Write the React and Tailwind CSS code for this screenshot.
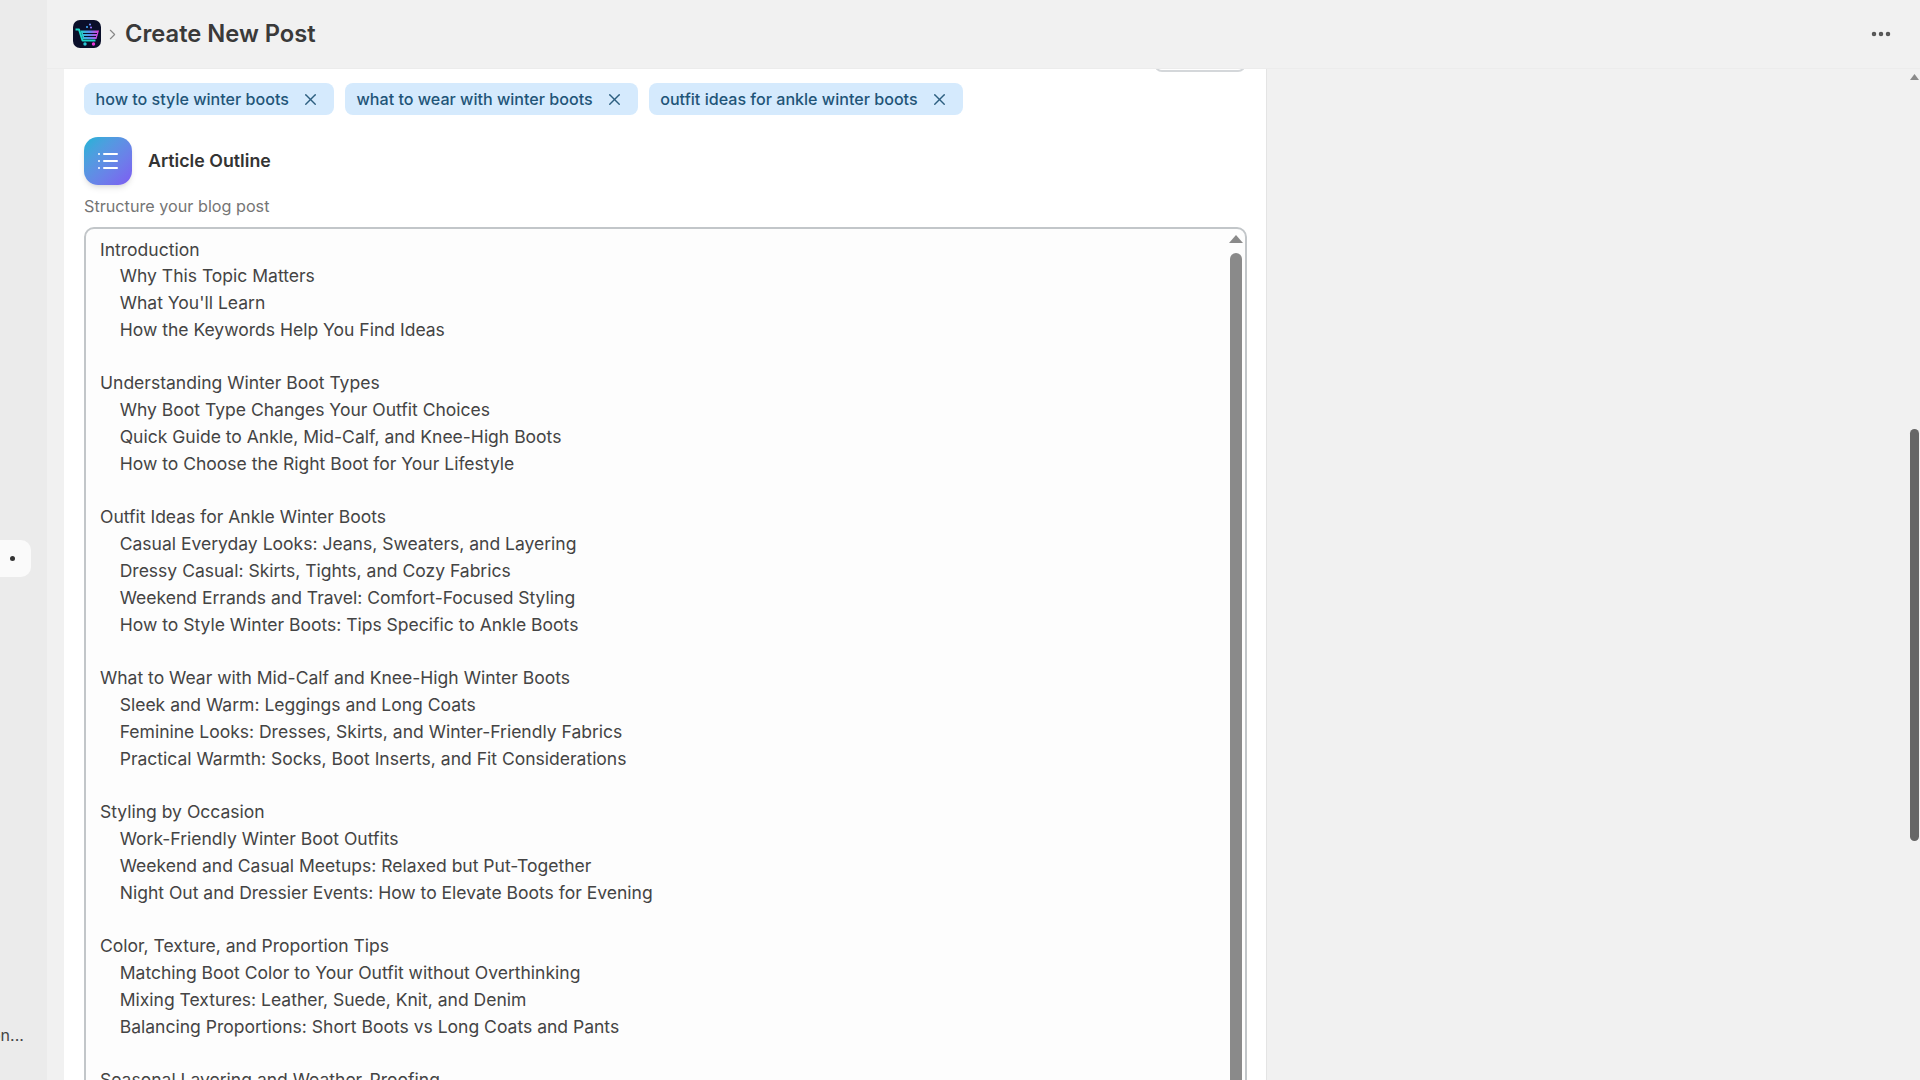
import React from "react";
import { X, List, ChevronRight, MoreHorizontal } from "lucide-react";

const keywords = ["how to style winter boots", "what to wear with winter boots", "outfit ideas for ankle winter boots"];

const outline = `Introduction
    Why This Topic Matters
    What You'll Learn
    How the Keywords Help You Find Ideas

Understanding Winter Boot Types
    Why Boot Type Changes Your Outfit Choices
    Quick Guide to Ankle, Mid-Calf, and Knee-High Boots
    How to Choose the Right Boot for Your Lifestyle

Outfit Ideas for Ankle Winter Boots
    Casual Everyday Looks: Jeans, Sweaters, and Layering
    Dressy Casual: Skirts, Tights, and Cozy Fabrics
    Weekend Errands and Travel: Comfort-Focused Styling
    How to Style Winter Boots: Tips Specific to Ankle Boots

What to Wear with Mid-Calf and Knee-High Winter Boots
    Sleek and Warm: Leggings and Long Coats
    Feminine Looks: Dresses, Skirts, and Winter-Friendly Fabrics
    Practical Warmth: Socks, Boot Inserts, and Fit Considerations

Styling by Occasion
    Work-Friendly Winter Boot Outfits
    Weekend and Casual Meetups: Relaxed but Put-Together
    Night Out and Dressier Events: How to Elevate Boots for Evening

Color, Texture, and Proportion Tips
    Matching Boot Color to Your Outfit without Overthinking
    Mixing Textures: Leather, Suede, Knit, and Denim
    Balancing Proportions: Short Boots vs Long Coats and Pants

Seasonal Layering and Weather-Proofing`;

function Logo() {
    return (
        <svg width="28" height="28" viewBox="0 0 28 28" className="rounded-[7px]">
            <defs>
                <linearGradient id="cart" x1="0" y1="0" x2="1" y2="0">
                    <stop offset="0" stopColor="#1fd6c8" />
                    <stop offset="0.5" stopColor="#5b8cf0" />
                    <stop offset="1" stopColor="#e838d8" />
                </linearGradient>
            </defs>
            <rect width="28" height="28" fill="#0a0f2a" />
            <path d="M2.500 9.500H6l3.500 11h13" fill="none" stroke="#1fd6c8" strokeWidth="2" strokeLinejoin="round" />
            <path d="M7.500 10.500H26L23.500 19H10z" fill="url(#cart)" />
            <path d="M10 13.500h14M11 16.500h12" stroke="#0a0f2a" strokeWidth="1" />
            <circle cx="12" cy="24" r="1.700" fill="#2bc8d8" />
            <circle cx="20.500" cy="24" r="1.700" fill="#e838d8" />
            <circle cx="14" cy="7" r="1.100" fill="#3fa9f5" />
            <circle cx="17" cy="4.500" r="1.100" fill="#6f8cf0" />
            <circle cx="18" cy="7.500" r="1.100" fill="#8f6cf0" />
        </svg>
    );
}

function ArrowUp({ className, w = 14, h = 8 }) {
    return (
        <svg width={w} height={h} viewBox={`0 0 ${w} ${h}`} className={className}>
            <path d={`M${w / 2} 0L${w} ${h}H0z`} fill="currentColor" />
        </svg>
    );
}

export default function App() {
    return (
        <div className="h-screen w-full flex overflow-hidden bg-[#f1f1f1] text-[#333] font-['Inter',sans-serif]">
            <aside className="w-[47px] shrink-0 bg-[#ebebeb] flex flex-col pt-[540px]">
                <div className="w-[31px] h-[37px] bg-[#fafafa] rounded-r-[10px] flex items-center pl-[10px]">
                    <span className="w-[5px] h-[5px] rounded-full bg-[#333]" />
                </div>
                <div className="mt-[447px] text-[16px] leading-[22px] text-[#444] -ml-[9px] w-[36px]">on...</div>
            </aside>

            <div className="flex-1 flex flex-col min-w-0">
                <header className="h-[69px] shrink-0 flex items-center pl-[26px] pr-[27px] border-b border-[#ececec]">
                    <Logo />
                    <ChevronRight size={17} strokeWidth={1.6} className="text-[#888] ml-[3px] mr-[4px]" />
                    <h1 className="text-[23.700px] font-semibold text-[#3a3a3a] -mt-[1px]">Create New Post</h1>
                    <MoreHorizontal size={24} strokeWidth={2.5} className="ml-auto text-[#555]" />
                </header>

                <div className="flex-1 flex min-h-0 overflow-hidden">
                    <main className="ml-[17px] w-[1203px] shrink-0 bg-white border-r border-[#e4e4e4] pl-[20px] pr-[19px] overflow-hidden">
                        <div className="flex justify-end pr-[1px] -mt-[40px] mb-[11px]">
                            <div className="w-[92px] h-[43px] rounded-[8px] border-2 border-[#d4d7da] bg-white" />
                        </div>

                        <div className="flex gap-[10.500px]">
                            {keywords.map((k) => (
                                <span key={k} className="h-[32px] flex items-center gap-[12px] pl-[11.500px] pr-[14.500px] rounded-[8px] bg-[#d5eafd] text-[#1f5578] text-[16.100px] font-medium">
                                    {k}
                                    <X size={19} strokeWidth={1.8} className="text-[#2d5f80]" />
                                </span>
                            ))}
                        </div>

                        <div className="flex items-center gap-[16px] mt-[22px]">
                            <div className="w-[48px] h-[48px] rounded-[14px] bg-gradient-to-br from-[#10b4d6] to-[#7d5bf2] shadow-md flex items-center justify-center text-white">
                                <List size={24} strokeWidth={2} />
                            </div>
                            <h2 className="text-[17.800px] font-semibold text-[#333] mt-[1px]">Article Outline</h2>
                        </div>

                        <p className="mt-[10px] text-[16.200px] leading-[22px] text-[#757575]">Structure your blog post</p>

                        <div className="relative mt-[10px] h-[900px] rounded-[10px] border-2 border-[#c2c6c9] bg-[#fdfdfd] pl-[14px] pt-[7.500px]">
                            <div className="whitespace-pre-wrap text-[17.520px] leading-[26.800px] text-[#444]">{outline}</div>
                            <div className="absolute top-[6px] right-[2px] w-[14px] flex flex-col items-center">
                                <ArrowUp className="text-[#8a8a8a]" />
                                <div className="mt-[10px] w-[12px] h-[860px] rounded-full bg-[#8a8a8a]" />
                            </div>
                        </div>
                    </main>

                    <div className="flex-1 relative">
                        <ArrowUp w={9} h={6} className="absolute top-[5px] right-[1px] text-[#8a8a8a]" />
                        <div className="absolute top-[360px] right-[1px] w-[9px] h-[412px] rounded-full bg-[#666]" />
                    </div>
                </div>
            </div>
        </div>
    );
}
